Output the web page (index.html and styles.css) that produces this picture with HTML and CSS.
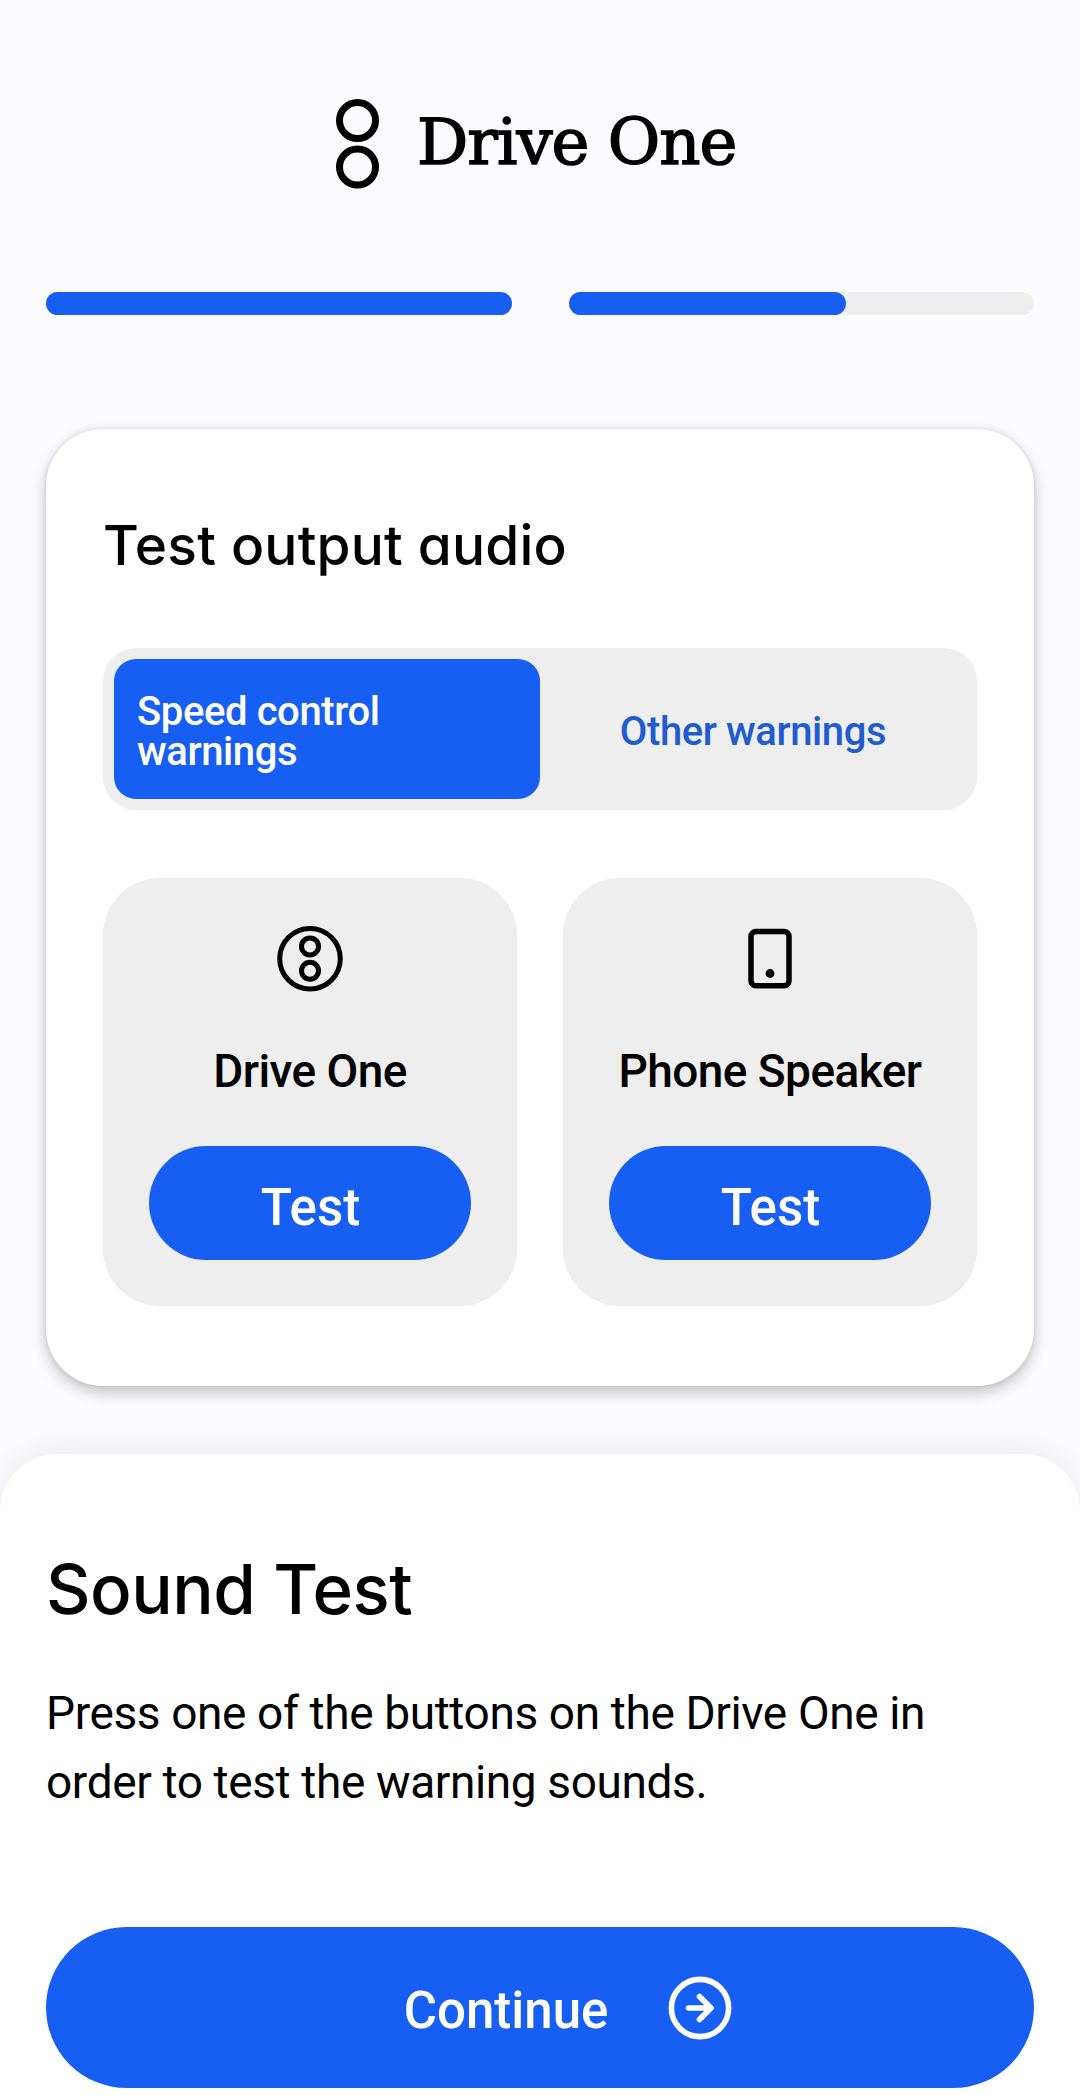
FILE: index.html
```html
<!DOCTYPE html>
<html lang="en">
<head>
  <meta charset="UTF-8">
  <meta name="viewport" content="width=device-width, initial-scale=1.0">
  <title>Drive One - Sound Test</title>
  <link rel="stylesheet" href="styles.css">
</head>
<body>
  <!-- Logo -->
  <header class="logo">
    <svg class="logo-mark" width="43" height="90" viewBox="0 0 43 90" fill="none" stroke="#000" stroke-width="7">
      <circle cx="21.5" cy="21.5" r="18"/>
      <circle cx="21.5" cy="68" r="18"/>
    </svg>
    <span class="logo-text">Drive One</span>
  </header>

  <!-- Setup progress -->
  <div class="progress">
    <div class="progress-track"><div class="progress-fill" style="width: 100%"></div></div>
    <div class="progress-track"><div class="progress-fill" style="width: 59.7%"></div></div>
  </div>

  <!-- Audio output card -->
  <main class="card">
    <h2 class="card-title">Test output audio</h2>
    <div class="tabs">
      <button class="tab active">Speed control warnings</button>
      <button class="tab">Other warnings</button>
    </div>
    <div class="devices">
      <div class="device">
        <svg width="70" height="70" viewBox="0 0 70 70" fill="none" stroke="#000" stroke-width="5">
          <circle cx="35" cy="34.7" r="30.3"/>
          <circle cx="35" cy="22.4" r="8.5"/>
          <circle cx="35" cy="46.7" r="8.5"/>
        </svg>
        <p class="device-name">Drive One</p>
        <button class="test-button">Test</button>
      </div>
      <div class="device">
        <svg width="70" height="70" viewBox="0 0 70 70" fill="none" stroke="#000" stroke-width="5.5">
          <rect x="16" y="7.5" width="38" height="54.2" rx="5"/>
          <circle cx="35" cy="49.5" r="4.4" fill="#000" stroke="none"/>
        </svg>
        <p class="device-name">Phone Speaker</p>
        <button class="test-button">Test</button>
      </div>
    </div>
  </main>

  <!-- Bottom sheet -->
  <section class="sheet">
    <h1 class="sheet-title">Sound Test</h1>
    <p class="sheet-text">Press one of the buttons on the Drive One in order to test the warning sounds.</p>
    <button class="continue-button">
      <span>Continue</span>
      <svg width="64" height="64" viewBox="0 0 64 64" fill="none" stroke="#fff" stroke-width="5.6" stroke-linecap="round" stroke-linejoin="round">
        <circle cx="32" cy="32" r="28.6"/>
        <path d="M20.5 32H43M31.5 20.5L43 32L31.5 43.5"/>
      </svg>
    </button>
  </section>
</body>
</html>
```
FILE: styles.css
```css
* {
  box-sizing: border-box;
}
body {
  font-family: Roboto, 'Liberation Sans', sans-serif;
  margin: 0;
  height: 2099px;
  display: flex;
  flex-direction: column;
  background: #fcfbff;
  color: #000;
  overflow: hidden;
}
h1, h2, p {
  margin: 0;
}
button {
  font-family: inherit;
  border: none;
  padding: 0;
  cursor: pointer;
}
.logo {
  display: flex;
  align-items: center;
  gap: 38px;
  height: 292px;
  padding: 0 0 5px 336px;
}
.logo-text {
  font-family: 'DejaVu Serif', serif;
  font-size: 64px;
  letter-spacing: -1px;
  line-height: 80px;
  padding-bottom: 4px;
  white-space: nowrap;
  -webkit-text-stroke: 1.5px #000;
}
.progress {
  display: flex;
  gap: 57px;
  padding: 0 46px;
}
.progress-track {
  flex: 1;
  height: 23px;
  border-radius: 12px;
  background: #eee;
}
.progress-fill {
  height: 100%;
  border-radius: 12px;
  background: #175ff2;
}
.card {
  height: 957px;
  margin: 114px 46px 0;
  padding: 80px 57px 0;
  border-radius: 57px;
  background: #fff;
  box-shadow: 0 6px 16px rgba(0, 0, 0, 0.24), 0 0 4px rgba(0, 0, 0, 0.1);
}
.card-title {
  font-family: Inter, 'Liberation Sans', sans-serif;
  font-feature-settings: 'cv11';
  font-size: 55px;
  font-weight: 450;
  line-height: 72px;
  letter-spacing: 0.2px;
  white-space: nowrap;
}
.tabs {
  display: flex;
  height: 162px;
  margin-top: 67px;
  padding: 11px;
  border-radius: 33px;
  background: #eee;
}
.tab {
  flex: 1;
  padding: 6px 23px 0;
  border-radius: 22px;
  background: none;
  color: #215bd0;
  font-size: 40px;
  font-weight: 500;
  line-height: 40px;
  letter-spacing: -0.4px;
}
.tab.active {
  background: #175ff2;
  color: #fff;
  text-align: left;
}
.devices {
  display: flex;
  gap: 46px;
  margin-top: 68px;
}
.device {
  flex: 1;
  height: 428px;
  padding: 46px 46px 0;
  border-radius: 57px;
  background: #eee;
  display: flex;
  flex-direction: column;
  align-items: center;
}
.device-name {
  margin-top: 47px;
  font-size: 46px;
  font-weight: 500;
  line-height: 60px;
  letter-spacing: -0.55px;
  white-space: nowrap;
}
.test-button {
  width: 100%;
  height: 114px;
  margin-top: 45px;
  padding: 8px 0 0 1px;
  border-radius: 57px;
  background: #175ff2;
  color: #fff;
  font-size: 51px;
  font-weight: 500;
}
.sheet {
  flex: 1;
  margin-top: 68px;
  padding: 95px 46px 0;
  border-radius: 57px 57px 0 0;
  background: #fff;
  box-shadow: 0 -6px 34px rgba(0, 0, 0, 0.07);
}
.sheet-title {
  font-family: Inter, 'Liberation Sans', sans-serif;
  font-size: 69px;
  font-weight: 500;
  line-height: 80px;
  letter-spacing: -0.5px;
}
.sheet-text {
  margin-top: 50px;
  font-size: 46px;
  line-height: 69px;
  letter-spacing: -0.38px;
}
.continue-button {
  display: flex;
  align-items: center;
  justify-content: center;
  gap: 60px;
  width: 100%;
  height: 161px;
  margin-top: 110px;
  padding-left: 56px;
  border-radius: 81px;
  background: #175ff2;
  color: #fff;
  font-size: 51px;
  font-weight: 500;
}
.continue-button span {
  padding-top: 6px;
}
```
